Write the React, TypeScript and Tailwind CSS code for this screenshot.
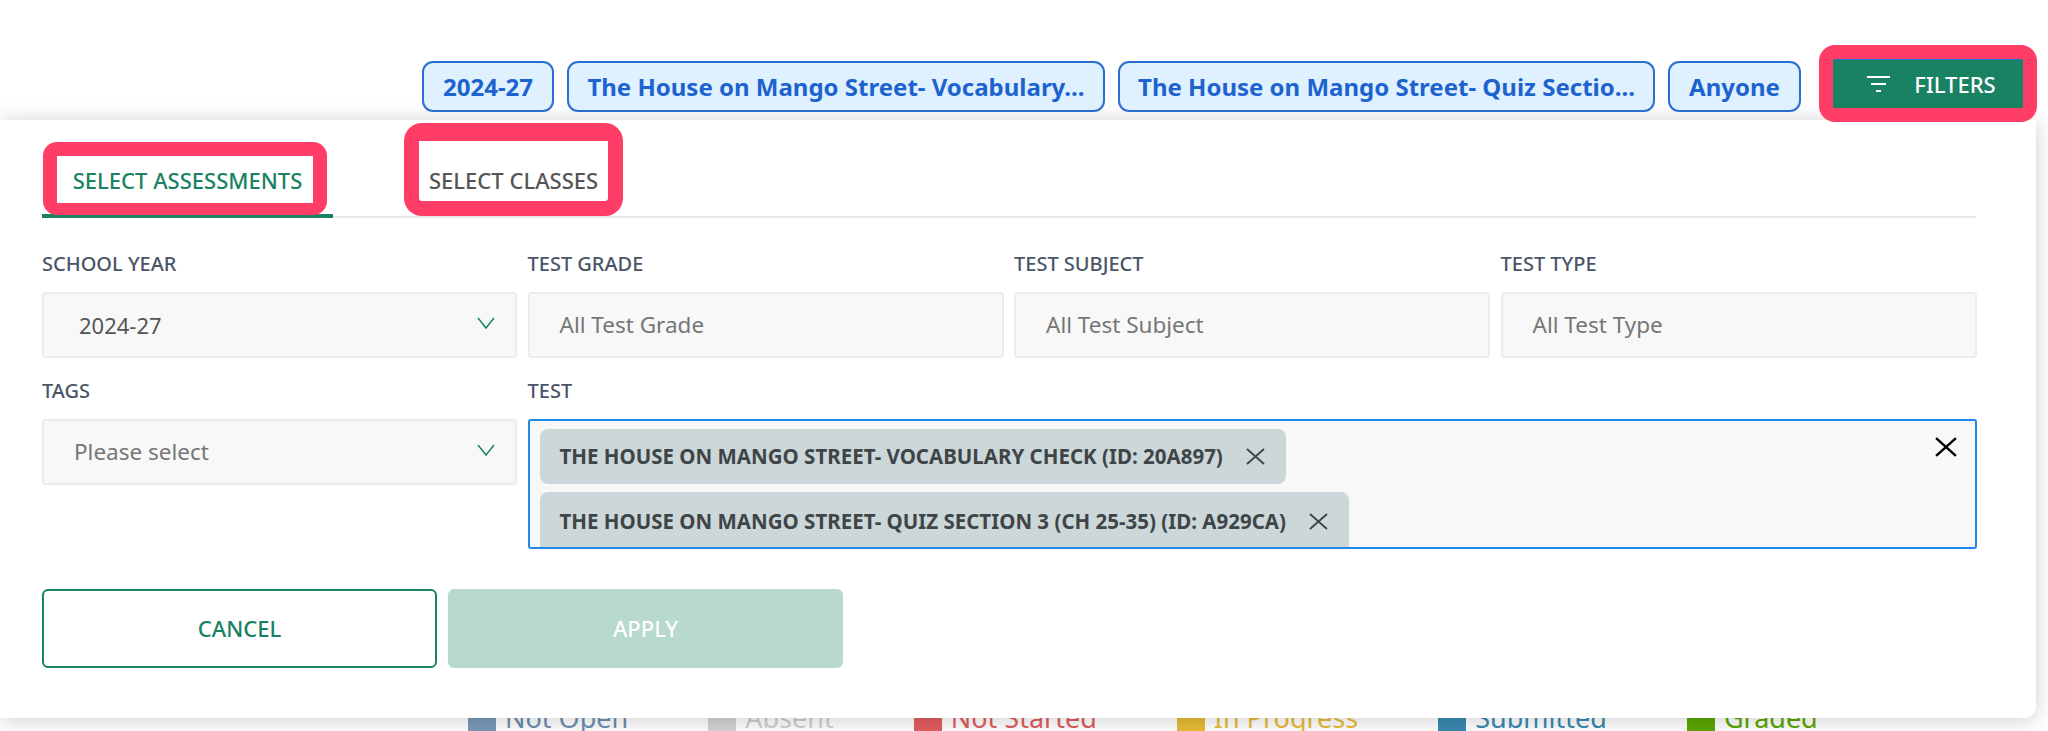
const FONT = "font-['Noto_Sans','Open_Sans',sans-serif]";

const LEGEND = [
  { label: "Not Open", swatch: "bg-[#7a9ab8]", text: "text-[#6f90b1]" },
  { label: "Absent", swatch: "bg-[#d4d4d4]", text: "text-[#cfcfcf]" },
  { label: "Not Started", swatch: "bg-[#e35d5f]", text: "text-[#e35d5f]" },
  { label: "In Progress", swatch: "bg-[#e8bc36]", text: "text-[#e8bc36]" },
  { label: "Submitted", swatch: "bg-[#3a8ab0]", text: "text-[#3a8ab0]" },
  { label: "Graded", swatch: "bg-[#5aa700]", text: "text-[#5aa700]" },
];

function Chip({ label, width }: { label: string; width: string }) {
  return (
    <div
      className={`flex h-[51px] shrink-0 items-center justify-center rounded-[11px] border-2 border-[#2a6fd0] bg-[#dff0ff] text-[24px] font-bold text-[#1d63cf] ${width}`}
    >
      {label}
    </div>
  );
}

function Chevron() {
  return (
    <svg width="18" height="12" viewBox="0 0 18 12" fill="none" stroke="#1a8363" strokeWidth="1.5" className="mb-[4px]">
      <path d="M1 1l8 10 8-10" />
    </svg>
  );
}

function Cross({ size, color, weight }: { size: number; color: string; weight: number }) {
  return (
    <svg width={size} height={size - 2} viewBox="0 0 20 18" fill="none" stroke={color} strokeWidth={weight}>
      <path d="M1 1l18 16M19 1L1 17" />
    </svg>
  );
}

function Field({
  label,
  value,
  chevron,
  dark,
}: {
  label: string;
  value: string;
  chevron?: boolean;
  dark?: boolean;
}) {
  return (
    <div className="flex flex-col">
      <div className="h-[38px] text-[20px] font-medium leading-[20px] text-[#4a5568]">{label}</div>
      <div
        className={`flex h-[66px] items-center justify-between rounded-[4px] border-2 border-[#ececec] bg-[#f8f8f8] pr-[20px] ${
          dark ? "pl-[35px] text-[22px] text-[#555555]" : "pl-[30px] text-[22.5px] text-[#767676]"
        }`}
      >
        {value}
        {chevron && <Chevron />}
      </div>
    </div>
  );
}

function TestTag({ label, clipped }: { label: string; clipped?: boolean }) {
  return (
    <div
      className={`flex w-fit items-center gap-[23px] bg-[#ccd7d9] pl-[20px] pr-[21px] text-[20.5px] font-bold text-[#3f4547] ${
        clipped ? "h-[58px] shrink-0 rounded-t-[8px]" : "h-[55px] shrink-0 rounded-[8px]"
      }`}
    >
      {label}
      <Cross size={19} color="#444444" weight={2} />
    </div>
  );
}

export default function App() {
  return (
    <div className={`relative h-[731px] w-[2048px] overflow-hidden bg-white ${FONT}`}>
      <div className="relative z-20 flex h-[120px] items-start justify-end gap-[11px] pr-[25px] pt-[58px]">
        <div className="mt-[3px] flex gap-[13px]">
          <Chip label="2024-27" width="w-[132px]" />
          <Chip label="The House on Mango Street- Vocabulary..." width="w-[538px]" />
          <Chip label="The House on Mango Street- Quiz Sectio..." width="w-[537px]" />
          <Chip label="Anyone" width="w-[133px]" />
        </div>
        <button className="relative ml-[21px] flex h-[52px] w-[190px] items-center justify-center gap-[24px] border-y-2 border-[#1a72c9] bg-[#188262] pl-[7px] text-[22px] font-medium text-white">
          <svg width="23" height="16" viewBox="0 0 23 16" fill="none" stroke="white" strokeWidth="2">
            <path d="M0 1h23M4 8h15M9 15h5" />
          </svg>
          FILTERS
          <span className="absolute -bottom-[4px] inset-x-0 h-[2px] bg-white" />
          <div className="absolute -inset-x-[14px] -bottom-[14px] -top-[15px] rounded-[16px] border-[14px] border-[#ff3d66]" />
        </button>
      </div>

      <div className="relative z-10 h-[598px] w-[2036px] rounded-br-[12px] bg-white pl-[42px] pr-[60px] pt-[30px] shadow-[0_2px_22px_rgba(0,0,0,0.2)]">
        <div className="flex h-[68px] border-b-2 border-[#e8e8e8] text-[22px] font-medium leading-[30px]">
          <div className="relative -mb-[2px] flex h-[68px] w-[291px] justify-center border-b-4 border-[#188262] pt-[15px] text-[#188262]">
            SELECT ASSESSMENTS
            <div className="absolute -top-[8px] -bottom-[1px] left-[1px] right-[6px] rounded-[14px] border-x-[14px] border-b-[12px] border-t-[14px] border-[#ff3d66]" />
          </div>
          <div className="relative ml-[96px] h-[66px] pt-[15px] text-[#555555]">
            SELECT CLASSES
            <div className="absolute -left-[25px] -right-[25px] -top-[27px] bottom-0 rounded-[18px] border-x-[15px] border-b-[15px] border-t-[18px] border-[#ff3d66]" />
          </div>
        </div>

        <div className="mt-[36px] grid grid-cols-[475px_476px_476px_476px] gap-x-[10.5px] gap-y-[23px]">
          <Field label="SCHOOL YEAR" value="2024-27" chevron dark />
          <Field label="TEST GRADE" value="All Test Grade" />
          <Field label="TEST SUBJECT" value="All Test Subject" />
          <Field label="TEST TYPE" value="All Test Type" />
          <Field label="TAGS" value="Please select" chevron />
          <div className="col-span-3 flex flex-col">
            <div className="h-[38px] text-[20px] font-medium leading-[20px] text-[#4a5568]">TEST</div>
            <div className="relative flex h-[130px] flex-col gap-[8px] overflow-hidden rounded-[3px] border-2 border-[#1f88e6] bg-[#f8f8f8] pl-[10px] pt-[8px]">
              <TestTag label="THE HOUSE ON MANGO STREET- VOCABULARY CHECK (ID: 20A897)" />
              <TestTag label="THE HOUSE ON MANGO STREET- QUIZ SECTION 3 (CH 25-35) (ID: A929CA)" clipped />
              <div className="absolute right-[18px] top-[16px]">
                <Cross size={22} color="#000000" weight={2.2} />
              </div>
            </div>
          </div>
        </div>

        <div className="mt-[40px] flex gap-[11px] text-[22px] font-medium">
          <button className="h-[79px] w-[395px] rounded-[6px] border-2 border-[#188262] bg-white text-[#188262]">CANCEL</button>
          <button className="h-[79px] w-[395px] rounded-[6px] bg-[#b8d9cf] text-white">APPLY</button>
        </div>
      </div>

      <div className="-mt-[20px] flex gap-[80px] pl-[468px]">
        {LEGEND.map((item) => (
          <div key={item.label} className={`flex items-center gap-[9px] text-[27px] leading-[40px] ${item.text}`}>
            <span className={`mt-[6px] h-[28px] w-[28px] ${item.swatch}`} />
            {item.label}
          </div>
        ))}
      </div>
    </div>
  );
}
